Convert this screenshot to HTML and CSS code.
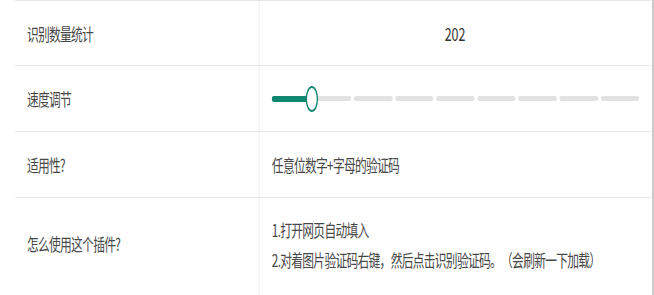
FILE: index.html
```html
<!DOCTYPE html>
<html>
<head>
  <meta charset="utf-8">
  <link rel="stylesheet" href="styles.css">
</head>
<body>
  <div class="frame">
    <div class="page">
      <div class="info-table">
        <div class="info-row">
          <div class="info-label">识别数量统计</div>
          <div class="info-value info-count">202</div>
        </div>

        <div class="info-row">
          <div class="info-label">速度调节</div>
          <div class="info-value">
            <div class="slider">
              <div class="slider-steps">
                <span></span><span></span><span></span>
                <span></span><span></span><span></span>
                <span></span><span></span><span></span>
              </div>
              <div class="slider-fill"></div>
              <div class="slider-thumb"></div>
            </div>
          </div>
        </div>

        <div class="info-row">
          <div class="info-label">适用性?</div>
          <div class="info-value">任意位数字+字母的验证码</div>
        </div>

        <div class="info-row info-row-tall">
          <div class="info-label">怎么使用这个插件?</div>
          <div class="info-value info-lines">
            <div>1.打开网页自动填入</div>
            <div>2.对着图片验证码右键，然后点击识别验证码。（会刷新一下加载）</div>
          </div>
        </div>
      </div>
    </div>
  </div>
</body>
</html>
```

FILE: styles.css
```css
html, body {
  margin: 0;
  padding: 0;
  overflow: hidden;
}

body {
  background-color: #ffffff;
  font-family: "Noto Sans CJK SC", "Noto Sans", sans-serif;
  color: #474747;
}

.frame {
  width: 654px;
  height: 295px;
  overflow: hidden;
}

/* the capture is squeezed sideways, so the page is laid out wide and scaled */
.page {
  width: 948px;
  height: 295px;
  box-sizing: border-box;
  padding-left: 22px;
  border-right: 3px solid #c9c9c9;
  transform: scaleX(0.69);
  transform-origin: 0 0;
}

.info-table {
  width: 921px;
  border-top: 1px solid #e6e6e6;
}

.info-row {
  display: grid;
  grid-template-columns: 353px 1fr;
  height: 65px;
  border-bottom: 1px solid #e6e6e6;
  font-size: 17px;
  letter-spacing: -1px;
  text-spacing-trim: space-all;
}

.info-row:first-child {
  height: 64px;
}

.info-row-tall {
  height: 100px;
  border-bottom: none;
}

.info-label {
  display: flex;
  align-items: center;
  padding-left: 17px;
}

.info-row-tall .info-label {
  padding-bottom: 10px;
}

.info-value {
  display: flex;
  align-items: center;
  padding: 0 17px 0 18px;
  border-left: 1px solid #e6e6e6;
}

.info-count {
  justify-content: center;
  padding: 0;
  font-size: 18px;
  letter-spacing: 0;
  color: #333333;
}

.info-lines {
  flex-direction: column;
  align-items: flex-start;
  justify-content: center;
  line-height: 30px;
  padding-bottom: 6px;
}

.slider {
  position: relative;
  width: 100%;
  height: 26px;
  display: flex;
  align-items: center;
}

.slider-steps {
  display: flex;
  gap: 4px;
  width: 100%;
}

.slider-steps span {
  flex: 1;
  height: 5px;
  border-radius: 3px;
  background-color: #e2e2e2;
}

.slider-fill {
  position: absolute;
  left: 0;
  top: 10px;
  width: 52px;
  height: 6px;
  border-radius: 3px;
  background-color: #12876f;
}

.slider-thumb {
  position: absolute;
  left: 49px;
  top: 0;
  width: 18px;
  height: 26px;
  box-sizing: border-box;
  border: 2px solid #12876f;
  border-radius: 50%;
  background-color: #ffffff;
}
```
